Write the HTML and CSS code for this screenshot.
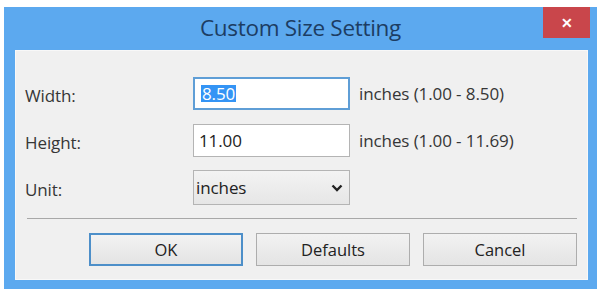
FILE: index.html
```html
<!DOCTYPE html>
<html lang="en">
<head>
    <meta charset="UTF-8">
    <title>Custom Size Setting</title>
    <link rel="stylesheet" href="styles.css">
</head>
<body>
    <div class="dialog">
        <div class="titlebar">
            <div class="title">Custom Size Setting</div>
            <div class="close">&#x2715;</div>
        </div>
        <div class="panel">
            <div class="form">
                <div class="label">Width:</div>
                <div class="field focus"><span class="sel">8.50</span></div>
                <div class="note">inches (1.00 - 8.50)</div>

                <div class="label">Height:</div>
                <div class="field">11.00</div>
                <div class="note">inches (1.00 - 11.69)</div>

                <div class="label">Unit:</div>
                <div class="select">
                    <span>inches</span>
                    <svg width="12" height="8" viewBox="0 0 12 8">
                        <polyline points="1.5,1.5 6,6 10.5,1.5" fill="none" stroke="#222" stroke-width="2.4"/>
                    </svg>
                </div>
                <div class="note"></div>
            </div>
            <div class="sep"></div>
            <div class="buttons">
                <div class="btn default">OK</div>
                <div class="btn">Defaults</div>
                <div class="btn">Cancel</div>
            </div>
        </div>
    </div>
</body>
</html>
```

FILE: styles.css
```css
body {
    margin: 0;
    background: #fff;
    font-family: "Open Sans", "Noto Sans", sans-serif;
}
.dialog {
    width: 593px;
    height: 282px;
    margin: 7px 0 0 4px;
    background: #5ca9ef;
    display: flex;
    flex-direction: column;
}
.titlebar {
    height: 43px;
    display: grid;
    grid-template-columns: 1fr auto 1fr;
}
.title {
    grid-column: 2;
    font-size: 22.5px;
    font-weight: 500;
    color: #1c3d63;
    line-height: 41px;
    letter-spacing: -0.3px;
}
.close {
    grid-column: 3;
    justify-self: end;
    width: 47px;
    height: 31px;
    margin-right: 7px;
    background: #c9464b;
    color: #fff;
    font-size: 14px;
    font-weight: bold;
    display: flex;
    align-items: center;
    justify-content: center;
}
.panel {
    margin: 0 9px 0 11px;
    height: 230px;
    background: #f0f0f0;
    border: 1px solid #f8f8f8;
    box-sizing: border-box;
    padding: 26px 10px 0 9px;
}
.form {
    display: grid;
    grid-template-columns: 168px 157px auto;
    grid-auto-rows: 33px;
    row-gap: 14px;
    align-items: center;
    font-size: 17px;
    font-weight: 500;
    color: #363636;
    letter-spacing: -0.1px;
}
.label {
    padding-top: 3px;
}
.field {
    height: 33px;
    box-sizing: border-box;
    border: 1px solid #b4b4b4;
    background: #fff;
    padding: 0 5px;
    display: flex;
    align-items: center;
    color: #222;
}
.field.focus {
    border: 2px solid #5f9ed6;
    padding-left: 6px;
}
.sel {
    background: #3494f5;
    color: #fff;
    line-height: 17px;
    padding: 0 1px;
}
.note {
    margin-left: 9px;
}
.select {
    height: 35px;
    box-sizing: border-box;
    border: 1px solid #b4b4b4;
    background: linear-gradient(#f3f3f3, #e6e6e6);
    padding: 0 6px 0 2px;
    display: flex;
    align-items: center;
    justify-content: space-between;
    color: #222;
}
.sep {
    height: 1px;
    background: #a8a8a8;
    margin: 14px 0 14px 2px;
}
.buttons {
    display: flex;
    justify-content: flex-end;
    gap: 13px;
}
.btn {
    width: 154px;
    height: 33px;
    box-sizing: border-box;
    border: 1px solid #adadad;
    background: linear-gradient(#f2f2f2, #e4e4e4);
    display: flex;
    align-items: center;
    justify-content: center;
    font-size: 16.5px;
    font-weight: 500;
    color: #222;
}
.btn.default {
    border: 2px solid #4d8fc9;
}
```
